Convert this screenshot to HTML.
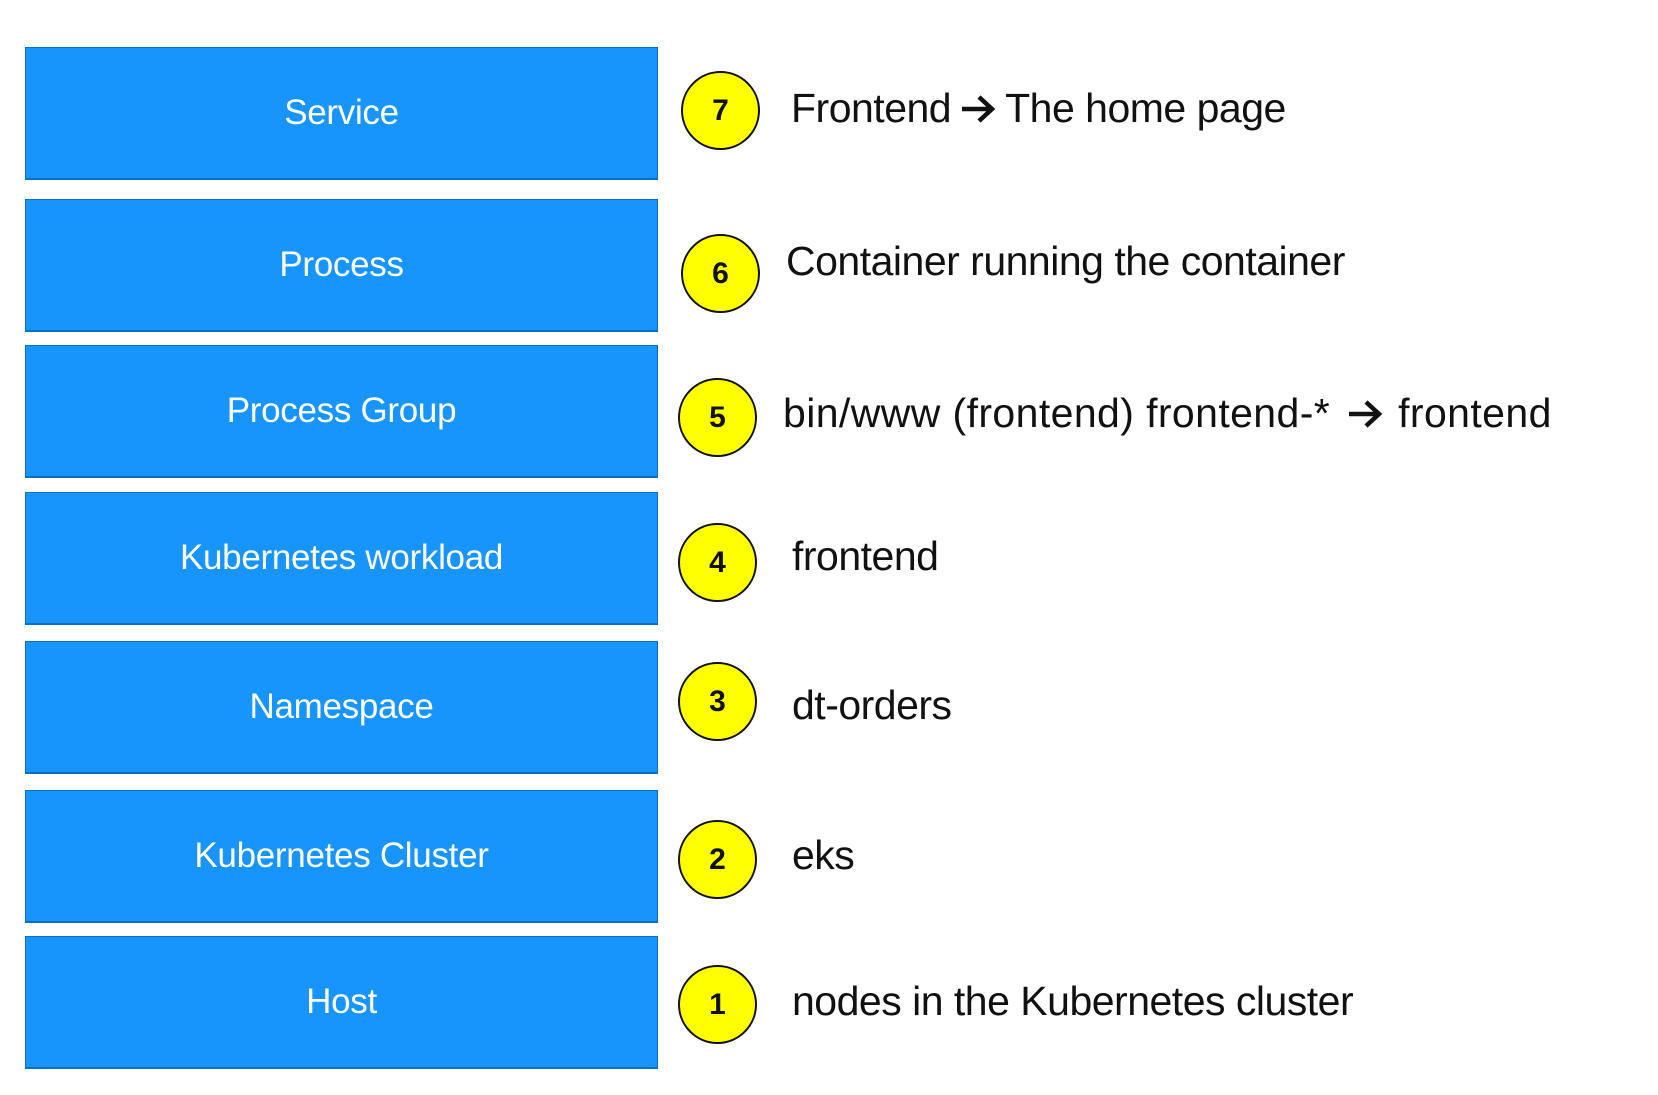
<!DOCTYPE html>
<html><head><style>
body{margin:0;width:1658px;height:1095px;background:#fff;position:relative;overflow:hidden;font-family:"Liberation Sans",sans-serif}
.b{position:absolute;left:25px;width:631px;height:130px;background:#1795fd;border:1px solid #0b6fc4;border-bottom:2px solid #0b6fc4;color:#fff;font-size:35px;display:flex;align-items:center;justify-content:center;letter-spacing:-0.3px}
.c{position:absolute;width:75px;height:75px;border-radius:50%;background:#ffff00;border:2px solid #111;font-weight:bold;font-size:30px;display:flex;align-items:center;justify-content:center;color:#111}
.t{position:absolute;font-size:41px;color:#111;letter-spacing:-0.5px;line-height:1;white-space:nowrap}
.a{display:inline-block;width:38px;height:32px;vertical-align:-3px;margin:0 8px}
</style></head><body>
<div class="b" style="top:47px">Service</div>
<div class="b" style="top:199px">Process</div>
<div class="b" style="top:345px">Process Group</div>
<div class="b" style="top:492px">Kubernetes workload</div>
<div class="b" style="top:641px">Namespace</div>
<div class="b" style="top:790px">Kubernetes Cluster</div>
<div class="b" style="top:936px">Host</div>

<div class="c" style="left:681px;top:71px">7</div>
<div class="c" style="left:681px;top:234px">6</div>
<div class="c" style="left:678px;top:378px">5</div>
<div class="c" style="left:678px;top:523px">4</div>
<div class="c" style="left:678px;top:662px">3</div>
<div class="c" style="left:678px;top:820px">2</div>
<div class="c" style="left:678px;top:965px">1</div>

<div class="t" style="left:791px;top:88px">Frontend<svg class="a" viewBox="0 0 38 32"><path d="M3 16H33M20 4L33 16L20 28" fill="none" stroke="#111" stroke-width="4.5"/></svg>The home page</div>
<div class="t" style="left:786px;top:241px">Container running the container</div>
<div class="t" style="left:783px;top:393px;letter-spacing:0.4px">bin/www (frontend) frontend-*<svg class="a" style="margin:0 14px 0 16px" viewBox="0 0 38 32"><path d="M3 16H33M20 4L33 16L20 28" fill="none" stroke="#111" stroke-width="4.5"/></svg>frontend</div>
<div class="t" style="left:792px;top:536px">frontend</div>
<div class="t" style="left:792px;top:685px">dt-orders</div>
<div class="t" style="left:792px;top:835px">eks</div>
<div class="t" style="left:792px;top:981px">nodes in the Kubernetes cluster</div>
</body></html>
